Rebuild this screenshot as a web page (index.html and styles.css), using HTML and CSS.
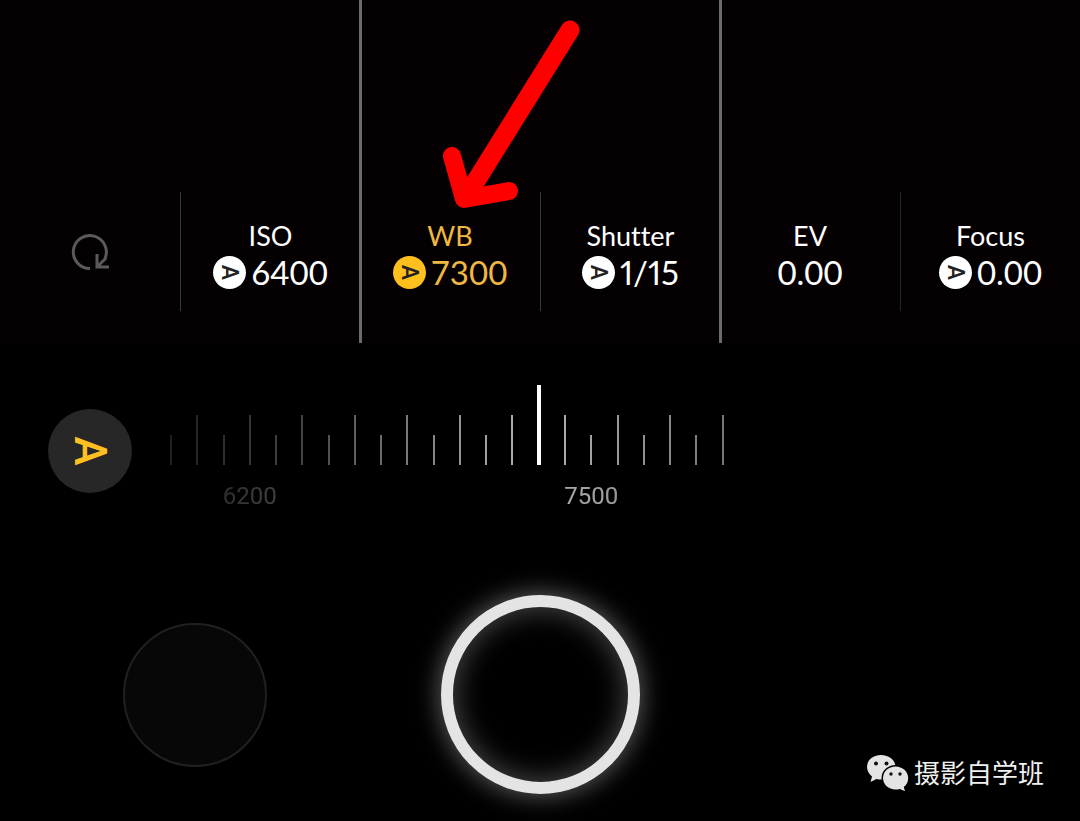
FILE: index.html
```html
<!DOCTYPE html>
<html lang="en">
<head>
<meta charset="utf-8">
<meta name="viewport" content="width=device-width, initial-scale=1">
<title>Pro camera</title>
<link rel="stylesheet" href="styles.css">
</head>
<body>
<main class="camera">
  <section class="meters" aria-label="Exposure settings">
    <button class="meter" type="button" aria-label="Reset">
      <span class="meter-body">
        <svg class="reset-icon" width="38" height="38" viewBox="0 0 38 38" fill="none" stroke="#5a5a5a" stroke-width="3" aria-hidden="true">
          <path d="M19 35.500A16.500 16.500 0 1 1 34 25.500"/>
          <path d="M26 21V34H38M26.500 33.500L35 25"/>
        </svg>
      </span>
    </button>
    <button class="meter" type="button">
      <span class="meter-body reading ruled">
        <span class="meter-name">ISO</span>
        <span class="meter-value"><span class="auto"><span class="turned">A</span></span>6400</span>
      </span>
    </button>
    <button class="meter framed active" type="button">
      <span class="meter-body reading">
        <span class="meter-name">WB</span>
        <span class="meter-value"><span class="auto"><span class="turned">A</span></span>7300</span>
      </span>
      <svg class="arrow" width="80" height="192" viewBox="0 0 80 192" fill="none" stroke="#fe0000" stroke-width="18" stroke-linecap="round" stroke-linejoin="round" aria-hidden="true">
        <path d="M130 11L26 178" stroke-width="19"/>
        <path d="M12 137L24 180L69 172"/>
      </svg>
    </button>
    <button class="meter" type="button">
      <span class="meter-body reading ruled">
        <span class="meter-name">Shutter</span>
        <span class="meter-value fraction"><span class="auto"><span class="turned">A</span></span>1/15</span>
      </span>
    </button>
    <button class="meter framed" type="button">
      <span class="meter-body reading">
        <span class="meter-name">EV</span>
        <span class="meter-value">0.00</span>
      </span>
    </button>
    <button class="meter" type="button">
      <span class="meter-body reading ruled faint">
        <span class="meter-name">Focus</span>
        <span class="meter-value"><span class="auto"><span class="turned">A</span></span>0.00</span>
      </span>
    </button>
  </section>

  <section class="adjust" aria-label="White balance">
    <button class="auto-toggle" type="button"><span class="turned">A</span></button>
    <div class="ruler">
      <input class="dial" type="range" min="0" max="21" value="14" aria-label="Colour temperature">
      <div class="scale">
        <div class="ticks">
          <i></i><i></i><i></i><i></i><i></i><i></i><i></i><i></i><i></i><i></i><i></i>
          <i></i><i></i><i></i><i></i><i></i><i></i><i></i><i></i><i></i><i></i><i></i>
        </div>
        <div class="marks">
          <span class="mark-low">6200</span>
          <span class="mark-high">7500</span>
        </div>
      </div>
    </div>
  </section>

  <section class="capture">
    <button class="gallery" type="button" aria-label="Gallery"></button>
    <button class="shutter" type="button" aria-label="Take photo"></button>
    <div class="credit" lang="zh-CN">
      <svg width="43" height="37" viewBox="0 0 43 37" aria-hidden="true">
        <path fill="#e4e4e4" d="M15 1C7 1 1 6 1 13c0 4 2 7 5 9.500L4.500 28l6-3c1.500.4 3 .6 4.500.6 8 0 14.500-5.500 14.500-12.500S23 1 15 1z"/>
        <ellipse cx="29.500" cy="24" rx="14" ry="13" fill="#000"/>
        <path fill="#e4e4e4" d="M29.500 12.500C22.500 12.500 17 17.500 17 24s5.500 11.500 12.500 11.500c1.500 0 3-.2 4.300-.6L39 37.200l-1.200-4.200c2.700-2 4.400-5.300 4.400-9C42.200 17.500 36.500 12.500 29.500 12.500z"/>
        <g fill="#111"><circle cx="10" cy="9.500" r="2"/><circle cx="20.500" cy="9.500" r="2"/><circle cx="25" cy="20" r="1.700"/><circle cx="34" cy="20" r="1.700"/></g>
      </svg>
      <span>摄影自学班</span>
    </div>
  </section>
</main>
</body>
</html>
```

FILE: styles.css
```css
* {
  box-sizing: border-box;
}

body {
  margin: 0;
  background: #000;
  color: #fff;
  font-family: Lato, "Open Sans", "Noto Sans CJK SC", sans-serif;
  font-variant-ligatures: none;
}

button {
  margin: 0;
  padding: 0;
  border: 0;
  background: none;
  color: inherit;
  font: inherit;
  font-variant-ligatures: none;
  cursor: pointer;
}

.camera {
  min-height: 100vh;
}

/* Settings strip */
.meters {
  display: grid;
  grid-template-columns: repeat(6, 1fr);
  background: #050103;
}

.meter {
  position: relative;
  padding: 192px 0 32px;
}

.framed::before {
  content: "";
  position: absolute;
  top: 0;
  bottom: 0;
  left: -1px;
  width: 3px;
  background: #6c6c6c;
}

.meter-body {
  display: flex;
  flex-direction: column;
  align-items: center;
  justify-content: center;
  height: 119px;
}

.reading {
  padding-top: 5px;
}

.ruled {
  border-left: 1px solid #3c3a3b;
}

.faint {
  border-color: #262425;
}

.meter-name {
  font-size: 27px;
  line-height: 36px;
}

.meter-value {
  display: flex;
  align-items: center;
  gap: 5px;
  font-size: 33px;
  line-height: 36px;
}

.fraction {
  font-variant-numeric: proportional-nums;
}

.active {
  color: #f0b842;
}

.auto {
  display: grid;
  place-items: center;
  width: 33px;
  height: 33px;
  border-radius: 50%;
  background: #fff;
  color: #222;
  font-family: Roboto, sans-serif;
  font-size: 23px;
  font-weight: 500;
  line-height: 33px;
}

.active .auto {
  background: #ffc01e;
}

.turned {
  display: block;
  transform: rotate(90deg);
}

.arrow {
  position: absolute;
  top: 19px;
  left: 80px;
  overflow: visible;
  pointer-events: none;
}

/* White balance ruler */
.adjust {
  display: grid;
  grid-template-columns: 84px 1fr;
  gap: 37px;
  align-items: start;
  padding: 42px 32.9% 0 48px;
}

.auto-toggle {
  display: grid;
  place-items: center;
  width: 84px;
  height: 84px;
  margin-top: 24px;
  border-radius: 50%;
  background: #272727;
  color: #ffc022;
  font-family: Roboto, sans-serif;
  font-size: 44px;
  font-weight: 500;
  line-height: 44px;
}

.ruler {
  display: grid;
}

.dial,
.scale {
  grid-area: 1 / 1;
}

.dial {
  appearance: none;
  z-index: 1;
  width: 100%;
  height: 80px;
  margin: 0;
  background: transparent;
}

.dial::-webkit-slider-thumb {
  appearance: none;
  width: 4px;
  height: 80px;
  background: #fff;
}

.scale {
  mask-image: linear-gradient(to right, rgb(0 0 0 / 12%), rgb(0 0 0 / 28%) 25%, rgb(0 0 0 / 70%) 64%, rgb(0 0 0 / 66%) 72%, rgb(0 0 0 / 46%));
}

.ticks {
  display: flex;
  justify-content: space-between;
  align-items: flex-end;
  height: 80px;
  padding: 0 1px;
}

.ticks i {
  width: 2px;
  height: 30px;
  background: #fff;
}

.ticks i:nth-child(even) {
  height: 50px;
}

.marks {
  display: grid;
  grid-template-columns: repeat(21, minmax(0, 1fr));
  margin-top: 17px;
  padding: 0 2px;
  font-family: Roboto, sans-serif;
  font-size: 24px;
  line-height: 28px;
  text-align: center;
}

.mark-low {
  grid-column: 2 / 6;
}

.mark-high {
  grid-column: 15 / 19;
}

/* Capture row */
.capture {
  display: grid;
  grid-template-columns: 13fr 10fr 13fr;
  align-items: center;
  justify-items: center;
  padding: 85px 0 27px;
}

.gallery {
  width: 144px;
  height: 144px;
  border: 2px solid #202020;
  border-radius: 50%;
  background: #070707;
}

.shutter {
  width: 199px;
  height: 199px;
  border: 12px solid #e4e4e4;
  border-radius: 50%;
  box-shadow: 0 0 24px 2px #5c5c5c, inset 0 0 28px 2px #484848;
}

.credit {
  display: flex;
  align-items: center;
  align-self: end;
  justify-self: end;
  gap: 5px;
  padding-right: 36px;
  color: #f0f0f0;
  font-family: "Noto Sans CJK SC", sans-serif;
  font-size: 26px;
  line-height: 44px;
}
```
